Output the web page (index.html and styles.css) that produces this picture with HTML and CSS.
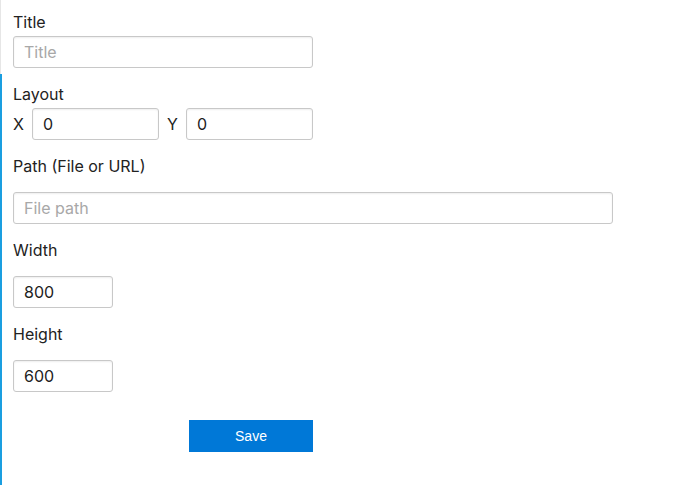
FILE: index.html
```html
<!DOCTYPE html>
<html>
<head>
<meta charset="utf-8">
<link rel="stylesheet" href="styles.css">
</head>
<body>
<div class="page">
  <div class="rail"><div class="rail-top"></div><div class="rail-active"></div></div>
  <form class="form">
    <label class="label tight">Title</label>
    <input class="input wide" type="text" placeholder="Title">
    <label class="label tight">Layout</label>
    <div class="xy">
      <span class="axis">X</span>
      <input class="input coord" type="text" value="0">
      <span class="axis">Y</span>
      <input class="input coord" type="text" value="0">
    </div>
    <label class="label">Path (File or URL)</label>
    <input class="input full" type="text" placeholder="File path">
    <label class="label">Width</label>
    <input class="input small" type="text" value="800">
    <label class="label">Height</label>
    <input class="input small" type="text" value="600">
    <div class="actions"><button type="button" class="save">Save</button></div>
  </form>
</div>
</body>
</html>
```
FILE: styles.css
```css
html, body {
  margin: 0;
  padding: 0;
  background: #fff;
}
body {
  font-family: Inter, "Liberation Sans", Arial, sans-serif;
  color: #222;
}
.page {
  display: flex;
  min-height: 485px;
}
.rail {
  width: 2px;
  display: flex;
  flex-direction: column;
}
.rail-top {
  height: 74px;
  width: 1px;
  background: #e6e6e6;
}
.rail-active {
  flex: 1;
  background: #1a9ee0;
}
.form {
  display: flex;
  flex-direction: column;
  align-items: flex-start;
  padding: 12px 0 0 11px;
}
.label {
  display: block;
  font-size: 16px;
  line-height: 20px;
  height: 20px;
  margin-bottom: 16px;
  color: #222;
}
.label.tight {
  margin-bottom: 4px;
}
.input {
  box-sizing: border-box;
  height: 32px;
  border: 1px solid #c8c8c8;
  border-radius: 3px;
  box-shadow: inset 0 1px 2px rgba(0,0,0,0.07);
  padding: 0 10px;
  font-family: Inter, "Liberation Sans", Arial, sans-serif;
  font-size: 16px;
  color: #222;
  margin: 0 0 16px 0;
  outline: none;
}
.input::placeholder {
  color: #a8a8a8;
}
.wide { width: 300px; }
.full { width: 600px; }
.small { width: 100px; }
.coord { width: 127px; margin: 0; }
.xy {
  display: flex;
  align-items: center;
  margin-bottom: 16px;
}
.axis {
  font-size: 16px;
  width: 19px;
}
.xy .coord + .axis {
  margin-left: 8px;
}
.actions {
  width: 300px;
  display: flex;
  justify-content: flex-end;
  padding-top: 12px;
}
.save {
  width: 124px;
  height: 32px;
  border: none;
  background: #0078d7;
  color: #fff;
  font-family: "Liberation Sans", Arial, sans-serif;
  font-size: 14px;
  padding: 0;
}
```
